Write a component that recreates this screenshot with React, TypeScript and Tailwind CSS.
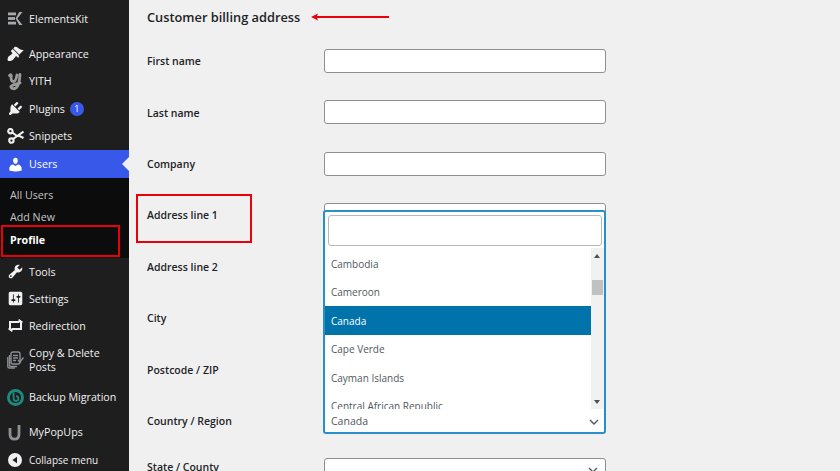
import React from "react";

const font = "[font-family:'Open_Sans','Noto_Sans',sans-serif]";

function Dash({ d, size = 17, fill = "#f0f0f1" }: { d: string; size?: number; fill?: string }) {
  return (
    <svg width={size} height={size} viewBox="0 0 20 20" fill={fill}>
      <path d={d} />
    </svg>
  );
}
const appearance = "M14.48 11.06L7.41 3.99l1.5-1.5c.5-.56 2.3-.47 3.51.32 1.21.8 1.43 1.28 2.91 2.1 1.18.64 2.45 1.26 4.45.85zm-.71.71L6.7 4.7 4.93 6.47c-.39.39-.39 1.02 0 1.41l1.06 1.06c.39.39.39 1.03 0 1.42-.6.6-1.43 1.11-2.21 1.69-.35.26-.7.53-1.01.84C1.43 13.23 0 16 1 18.5c2.5 1 5.27-.43 6.6-1.78.31-.31.58-.66.84-1.01.58-.78 1.09-1.61 1.69-2.21.39-.39 1.03-.39 1.42 0l1.06 1.06c.39.39 1.02.39 1.41 0z";
const plugins = "M13.11 4.36L9.87 7.6 8 5.73l3.24-3.24c.35-.34 1.05-.2 1.56.32.52.51.66 1.21.31 1.55zm-8 1.77l.91-1.12 9.01 9.01-1.19.84c-.71.71-2.63 1.16-3.82 1.16H6.14L4.9 17.26c-.59.59-1.54.59-2.12 0-.59-.58-.59-1.53 0-2.12l1.24-1.24v-3.88c0-1.13.4-3.19 1.09-3.89zm7.26 3.97l3.24-3.24c.34-.35 1.04-.21 1.55.31.52.51.66 1.21.31 1.55l-3.24 3.25z";
const users = "M10 9.25c-2.27 0-2.73-3.44-2.73-3.44C7 4.02 7.82 2 9.97 2c2.16 0 2.98 2.02 2.71 3.81 0 0-.41 3.44-2.68 3.44zm0 2.57L12.72 10c2.39 0 4.52 2.33 4.52 4.53v2.49s-3.65 1.13-7.24 1.13c-3.65 0-7.24-1.13-7.24-1.13v-2.49c0-2.25 1.94-4.48 4.47-4.48z";
const tools = "M16.68 9.77c-1.34 1.34-3.3 1.67-4.95.99l-5.41 6.52c-.99.99-2.59.99-3.58 0s-.99-2.59 0-3.57l6.52-5.42c-.68-1.65-.35-3.61.99-4.95 1.28-1.28 3.12-1.62 4.72-1.06l-2.89 2.89 2.82 2.82 2.86-2.87c.53 1.58.18 3.39-1.08 4.65zM3.81 16.21c.4.39 1.04.39 1.43 0 .4-.4.4-1.04 0-1.43-.39-.4-1.03-.4-1.43 0-.39.39-.39 1.03 0 1.43z";
const settings = "M18 16V4c0-1.1-.9-2-2-2H4c-1.1 0-2 .9-2 2v12c0 1.1.9 2 2 2h12c1.1 0 2-.9 2-2zM8 11h1c.55 0 1 .45 1 1s-.45 1-1 1H8v1.5c0 .28-.22.5-.5.5s-.5-.22-.5-.5V13H6c-.55 0-1-.45-1-1s.45-1 1-1h1V5.5c0-.28.22-.5.5-.5s.5.22.5.5V11zm5-2h-1c-.55 0-1-.45-1-1s.45-1 1-1h1V5.5c0-.28.22-.5.5-.5s.5.22.5.5V7h1c.55 0 1 .45 1 1s-.45 1-1 1h-1v5.5c0 .28-.22.5-.5.5s-.5-.22-.5-.5V9z";

function ElementsKitIcon() {
  return (
    <svg width="15" height="13" viewBox="0 0 15 13" fill="#a7aaad">
      <rect x="0" y="0.5" width="8" height="2.8" />
      <rect x="0" y="5.1" width="7" height="2.8" />
      <rect x="0" y="9.7" width="8" height="2.8" />
      <path d="M14.5 0 L9.4 6.5 L14.5 13 L11.2 13 L7.6 6.5 L11.2 0 Z" />
    </svg>
  );
}
function YithIcon() {
  return (
    <svg width="14" height="19" viewBox="0 0 14 19" fill="none" stroke="#9a9a9a" strokeWidth="2.8" strokeLinecap="round" strokeLinejoin="round">
      <path d="M1.5 3.5 C2.5 2 3.5 2.5 3.2 4.5 C2.8 7.5 3.5 9.5 5.5 9.5 C8 9.5 8.5 5 9 3 M12 2.5 C11.5 8 11.5 12.5 8.5 15.5 C6.5 17.5 3 17 2.8 14.5 C5 12.5 8 12 12 11" />
    </svg>
  );
}
function ScissorsIcon() {
  return (
    <svg width="17" height="16" viewBox="0 0 17 16" fill="none" stroke="#f0f0f1" strokeWidth="2.1">
      <circle cx="3.4" cy="3.2" r="2.2" />
      <circle cx="4.4" cy="12.6" r="2.2" />
      <path d="M5.3 4.5 L10 8 L12.5 8 L16.5 10 M6 11 L16.5 3.5" />
    </svg>
  );
}
function RedirectionIcon() {
  return (
    <svg width="15" height="13" viewBox="0 0 15 13" fill="none" stroke="#f0f0f1" strokeWidth="2">
      <path d="M11 3 H2 V10 M4 10 H13 V3" />
      <path d="M11 0.5 L14.5 3 L11 3 Z M4 12.5 L0.5 10 L4 10 Z" fill="#f0f0f1" strokeWidth="1" />
    </svg>
  );
}
function CopyIcon() {
  return (
    <svg width="17" height="18" viewBox="0 0 17 18" fill="none" stroke="#8c8f94" strokeWidth="1.4">
      <rect x="4" y="1" width="9" height="12" rx="2" />
      <path d="M2.5 4 V14 C2.5 15 3 15.5 4 15.5 H10" />
      <path d="M0.8 6 V15.5 C0.8 16.5 1.5 17 2.5 17 H8" />
      <path d="M6 4.5 H11 M6 7 H11 M6 9.5 H9" />
      <path d="M11 9 L13 11 L16.5 6.5" />
    </svg>
  );
}
function BackupIcon() {
  return (
    <svg width="17" height="17" viewBox="0 0 17 17">
      <circle cx="8.5" cy="8.5" r="8.5" fill="#1d8a7e" />
      <circle cx="8.5" cy="8.5" r="5.6" fill="#1e1e1e" />
      <path d="M6.6 3.6 V9.6 A2.4 2.4 0 1 0 9 7.2" fill="none" stroke="#1d8a7e" strokeWidth="1.8" />
    </svg>
  );
}
function PopUpsIcon() {
  return (
    <svg width="14" height="18" viewBox="0 0 14 18" fill="none" stroke="#8c8f94" strokeWidth="2.8">
      <path d="M2 5 V11 C2 14.5 4 16.2 6.5 16.2 C9 16.2 11 14.5 11 11 V2" />
    </svg>
  );
}
function CollapseIcon() {
  return (
    <svg width="14" height="14" viewBox="0 0 14 14">
      <circle cx="7" cy="7" r="7" fill="#f0f0f1" />
      <path d="M9 3.8 V10.2 L4.4 7 Z" fill="#1e1e1e" />
    </svg>
  );
}

function Item({ icon, label, h, badge, active, small }: { icon: React.ReactNode; label: React.ReactNode; h: string; badge?: string; active?: boolean; small?: boolean }) {
  return (
    <div className={`relative flex shrink-0 items-center ${h} ${active ? "bg-[#3858e9] text-white" : "text-[#f0f0f1]"}`}>
      <div className="flex w-[29px] shrink-0 items-center justify-center pl-[1px]">{icon}</div>
      <div className={`${small ? "text-[10px]" : "text-[10.7px]"} leading-[14px]`}>{label}</div>
      {badge && (
        <span className="ml-[5px] flex h-[14px] w-[14px] items-center justify-center rounded-full bg-[#3858e9] text-[9px] text-white">{badge}</span>
      )}
      {active && (
        <span className="absolute right-0 top-[7px] h-0 w-0 border-y-[7px] border-r-[7px] border-y-transparent border-r-[#f0f0f0]" />
      )}
    </div>
  );
}

function Row({ label, children, last }: { label: string; children?: React.ReactNode; last?: boolean }) {
  return (
    <div className={`flex h-[51.43px] shrink-0 items-center ${last ? "-mt-[2px]" : ""}`}>
      <div className={`w-[177px] text-[10.5px] font-semibold text-[#1d2327] ${last ? "pb-[4px]" : "pt-[2.5px]"}`}>{label}</div>
      {children}
    </div>
  );
}
const inputBox = "h-[24px] w-[282px] shrink-0 rounded-[3px] border border-[#8c8f94] bg-white";

function Chevron() {
  return (
    <svg width="10" height="6" viewBox="0 0 10 6" fill="none" stroke="#50575e" strokeWidth="1.4">
      <path d="M1 1 L5 5 L9 1" />
    </svg>
  );
}

export default function App() {
  const options = ["Cameroon", "Canada", "Cape Verde", "Cayman Islands", "Central African Republic"];
  return (
    <div className={`relative flex h-[471px] w-[840px] overflow-hidden bg-[#f0f0f0] ${font}`}>
      <aside className="flex w-[129px] shrink-0 flex-col bg-[#1e1e1e]">
        <div className="h-[5px] shrink-0" />
        <Item h="h-[27px]" icon={<ElementsKitIcon />} label="ElementsKit" />
        <div className="h-[8px] shrink-0" />
        <Item h="h-[27.5px]" icon={<Dash d={appearance} />} label="Appearance" />
        <Item h="h-[27.5px]" icon={<YithIcon />} label="YITH" />
        <Item h="h-[27.5px]" icon={<Dash d={plugins} />} label="Plugins" badge="1" />
        <Item h="h-[27.5px]" icon={<ScissorsIcon />} label="Snippets" />
        <Item h="h-[28px]" active icon={<Dash d={users} fill="#ffffff" />} label="Users" />
        <div className="flex h-[80px] shrink-0 flex-col bg-[#0c0c0c] pt-[6px] pl-[10px] text-[10.7px]">
          <div className="flex h-[22px] items-center text-[#c3c4c7]">All Users</div>
          <div className="flex h-[22px] items-center text-[#c3c4c7]">Add New</div>
          <div className="flex h-[24px] items-center font-bold text-white">Profile</div>
        </div>
        <Item h="h-[27px]" icon={<Dash d={tools} />} label="Tools" />
        <Item h="h-[27px]" icon={<Dash d={settings} />} label="Settings" />
        <Item h="h-[27px]" icon={<RedirectionIcon />} label="Redirection" />
        <Item h="h-[42px]" icon={<CopyIcon />} label={<>Copy &amp; Delete<br />Posts</>} />
        <Item h="h-[32px]" icon={<BackupIcon />} label="Backup Migration" />
        <div className="h-[5px] shrink-0" />
        <Item h="h-[28px]" icon={<PopUpsIcon />} label="MyPopUps" />
        <Item h="h-[28px]" small icon={<CollapseIcon />} label="Collapse menu" />
      </aside>

      <main className="flex min-w-0 flex-1 flex-col pl-[18px]">
        <div className="flex h-[35px] shrink-0 items-center text-[12.8px] font-semibold text-[#1d2327]">Customer billing address</div>
        <Row label="First name"><div className={inputBox} /></Row>
        <Row label="Last name"><div className={inputBox} /></Row>
        <Row label="Company"><div className={inputBox} /></Row>
        <Row label="Address line 1"><div className={inputBox} /></Row>
        <Row label="Address line 2"><div className={inputBox} /></Row>
        <Row label="City"><div className={inputBox} /></Row>
        <Row label="Postcode / ZIP"><div className={inputBox} /></Row>
        <Row label="Country / Region"><div className={inputBox} /></Row>
        <Row last label="State / County">
          <div className={`${inputBox} flex items-center justify-end pr-[7px]`}><Chevron /></div>
        </Row>
      </main>

      {/* Open country dropdown */}
      <div className="absolute left-[323px] top-[210px] flex h-[224px] w-[283px] flex-col rounded-[3px] border-2 border-[#2a8fc9] bg-white">
        <div className="pl-[3px] pr-[2px] pt-[3px]">
          <div className="h-[31px] rounded-[3px] border border-[#b4b9be] bg-white" />
        </div>
        <div className="relative mt-[2px] flex h-[161px] shrink-0 overflow-hidden">
          <div className="min-w-0 flex-1 text-[10px] text-[#50575e]">
            <div className="flex h-[29.5px] items-center pl-[6px] pt-[3px]">Cambodia</div>
            {options.map((o) => (
              <div key={o} className={`flex h-[28.5px] items-center pl-[6px] pt-[2px] ${o === "Canada" ? "bg-[#0073aa] text-white" : ""}`}>{o}</div>
            ))}
          </div>
          <div className="relative w-[13px] shrink-0 bg-[#f1f1f1]">
            <div className="absolute left-[3px] top-[6px] h-0 w-0 border-x-[3px] border-b-[4px] border-x-transparent border-b-[#505050]" />
            <div className="absolute left-[1px] top-[32px] h-[15px] w-[11px] bg-[#c1c1c1]" />
            <div className="absolute bottom-[5px] left-[3px] h-0 w-0 border-x-[3px] border-t-[4px] border-x-transparent border-t-[#505050]" />
          </div>
        </div>
        <div className="flex flex-1 items-center justify-between pl-[6px] pr-[5px] pt-[2px] text-[10.5px] text-[#50575e]">
          <span>Canada</span>
          <Chevron />
        </div>
      </div>

      {/* Red annotations */}
      <div className="absolute left-[136px] top-[194px] h-[49px] w-[116px] border-2 border-[#e8000b]" />
      <div className="absolute left-[1px] top-[225px] h-[32px] w-[119px] border-2 border-[#e8000b]" />
      <svg className="absolute left-[310px] top-[12px]" width="80" height="10" viewBox="0 0 80 10">
        <path d="M1 5 L8 1.5 L7 4 H79 V6 H7 L8 8.5 Z" fill="#e8000b" />
      </svg>
    </div>
  );
}
